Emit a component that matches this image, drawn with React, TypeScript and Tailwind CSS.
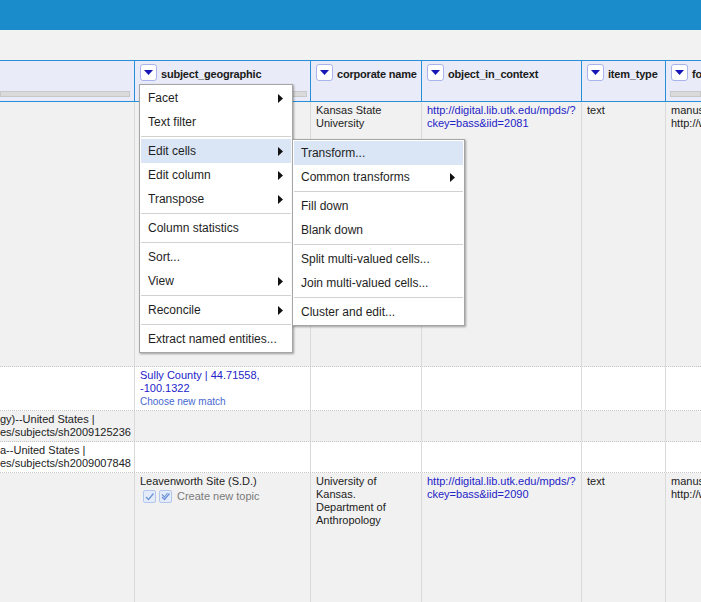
import React from 'react';

const cols = 'grid grid-cols-[134px_176px_111px_160px_84px_1fr]';

type Item = { label?: string; sub?: boolean; active?: boolean; sep?: boolean };

const mainMenu: Item[] = [
  { label: 'Facet', sub: true },
  { label: 'Text filter' },
  { sep: true },
  { label: 'Edit cells', sub: true, active: true },
  { label: 'Edit column', sub: true },
  { label: 'Transpose', sub: true },
  { sep: true },
  { label: 'Column statistics' },
  { sep: true },
  { label: 'Sort...' },
  { label: 'View', sub: true },
  { sep: true },
  { label: 'Reconcile', sub: true },
  { sep: true },
  { label: 'Extract named entities...' },
];

const subMenu: Item[] = [
  { label: 'Transform...', active: true },
  { label: 'Common transforms', sub: true },
  { sep: true },
  { label: 'Fill down' },
  { label: 'Blank down' },
  { sep: true },
  { label: 'Split multi-valued cells...' },
  { label: 'Join multi-valued cells...' },
  { sep: true },
  { label: 'Cluster and edit...' },
];

const Arrow = () => (
  <svg width="5" height="9" viewBox="0 0 5 9">
    <path d="M0 0L5 4.5L0 9Z" fill="#111" />
  </svg>
);

const Menu: React.FC<{ items: Item[]; className: string }> = ({ items, className }) => (
  <div className={`absolute bg-white border border-[#a6a6a6] shadow-[1px_1px_2px_rgba(0,0,0,0.35)] p-px ${className}`}>
    {items.map((it, i) =>
      it.sep ? (
        <div key={i} className="my-[2px] h-px bg-[#d2d2d2]" />
      ) : (
        <div
          key={i}
          className={`h-[24px] flex items-center justify-between pl-[7px] pr-[8px] text-[12px] text-[#1e1e1e] whitespace-nowrap ${it.active ? 'bg-[#dae5f6]' : ''}`}
        >
          <span>{it.label}</span>
          {it.sub && <Arrow />}
        </div>
      )
    )}
  </div>
);

const DropButton = () => (
  <div className="w-[17px] h-[17px] shrink-0 rounded-[3px] bg-white border border-[#a9b3ec] flex items-center justify-center">
    <svg width="9" height="5" viewBox="0 0 9 5">
      <path d="M0 0H9L4.5 5Z" fill="#1717b5" />
    </svg>
  </div>
);

const HeaderCell: React.FC<{ name?: string; first?: boolean; bar?: string }> = ({ name, first, bar }) => (
  <div className={`flex flex-col pt-[3px] overflow-hidden ${first ? '' : 'border-l border-[#2a8ed6]'}`}>
    <div className="h-[17px] flex items-start gap-[4px] pl-[5px] whitespace-nowrap">
      {name && <DropButton />}
      {name && (
        <span className="pt-[4px] text-[11px] leading-[13px] font-bold tracking-[-0.2px] text-[#1a1a1a]">{name}</span>
      )}
    </div>
    {bar && <div className={`mt-[10px] h-[6px] bg-[#dadada] border border-[#c8c8c8] ${bar}`} />}
  </div>
);

const Cell: React.FC<{ children?: React.ReactNode; first?: boolean }> = ({ children, first }) => (
  <div className={`pt-[2px] text-[11px] leading-[13px] text-[#222] overflow-hidden ${first ? 'pl-0' : 'px-[5px] border-l border-[#dadada]'}`}>
    {children}
  </div>
);

const Link: React.FC<{ children: React.ReactNode }> = ({ children }) => (
  <span className="text-[#2323c8]">{children}</span>
);

const CheckIcon: React.FC<{ double?: boolean }> = ({ double }) => (
  <svg width="13" height="13" viewBox="0 0 13 13">
    <rect x="0.5" y="0.5" width="12" height="12" rx="1.5" fill="#e4ecfa" stroke="#b2c6ee" />
    <path d="M3 7L5.5 9.5L10.5 3.5" fill="none" stroke="#6d93db" strokeWidth="1.3" />
    {double && <path d="M3 4.5L5.5 7L8.5 3" fill="none" stroke="#6d93db" strokeWidth="1.1" />}
  </svg>
);

export default function App() {
  return (
    <div className="relative w-full h-screen overflow-hidden bg-[#f2f2f2] font-['Liberation_Sans',Arial,sans-serif]">
      <div className="h-[30px] bg-[#1a8bcb]" />
      <div className="h-[30px] bg-[#f2f2f2]" />

      {/* Column headers */}
      <div className={`${cols} h-[42px] border-y border-[#2a8ed6] bg-[#e9ecf8]`}>
        <HeaderCell first bar="mr-[4px]" />
        <HeaderCell name="subject_geographic" bar="ml-[5px] mr-[3px]" />
        <HeaderCell name="corporate name" />
        <HeaderCell name="object_in_context" />
        <HeaderCell name="item_type" />
        <HeaderCell name="format" bar="ml-[4px]" />
      </div>

      {/* Rows */}
      <div className={`${cols} h-[265px] bg-[#f1f1f1] border-b border-dotted border-[#c6c6c6]`}>
        <Cell first />
        <Cell />
        <Cell>Kansas State<br />University</Cell>
        <Cell><Link>http://digital.lib.utk.edu/mpds/?<br />ckey=bass&amp;iid=2081</Link></Cell>
        <Cell>text</Cell>
        <Cell><div className="whitespace-nowrap">manuscripts<br />http://www.loc.gov</div></Cell>
      </div>

      <div className={`${cols} h-[44px] bg-white border-b border-dotted border-[#c6c6c6]`}>
        <Cell first />
        <Cell>
          <Link>Sully County | 44.71558,<br />-100.1322</Link>
          <div className="text-[10px] leading-[14px] text-[#4668d2]">Choose new match</div>
        </Cell>
        <Cell />
        <Cell />
        <Cell />
        <Cell />
      </div>

      <div className={`${cols} h-[31px] bg-[#f1f1f1] border-b border-dotted border-[#c6c6c6]`}>
        <Cell first><div className="whitespace-nowrap">gy)--United States |<br />es/subjects/sh2009125236</div></Cell>
        <Cell />
        <Cell />
        <Cell />
        <Cell />
        <Cell />
      </div>

      <div className={`${cols} h-[31px] bg-white border-b border-dotted border-[#c6c6c6]`}>
        <Cell first><div className="whitespace-nowrap">a--United States |<br />es/subjects/sh2009007848</div></Cell>
        <Cell />
        <Cell />
        <Cell />
        <Cell />
        <Cell />
      </div>

      <div className={`${cols} h-[200px] bg-[#f1f1f1]`}>
        <Cell first />
        <Cell>
          <div>Leavenworth Site (S.D.)</div>
          <div className="h-[16px] flex items-center gap-[3px] pl-[3px] whitespace-nowrap">
            <CheckIcon />
            <CheckIcon double />
            <span className="ml-[2px] text-[#7a7a7a]">Create new topic</span>
          </div>
        </Cell>
        <Cell>University of<br />Kansas.<br />Department of<br />Anthropology</Cell>
        <Cell><Link>http://digital.lib.utk.edu/mpds/?<br />ckey=bass&amp;iid=2090</Link></Cell>
        <Cell>text</Cell>
        <Cell><div className="whitespace-nowrap">manuscripts<br />http://www.loc.gov</div></Cell>
      </div>

      {/* Column dropdown menu and submenu */}
      <Menu items={mainMenu} className="left-[139px] top-[84px] w-[154px]" />
      <Menu items={subMenu} className="left-[292px] top-[139px] w-[173px]" />
    </div>
  );
}
